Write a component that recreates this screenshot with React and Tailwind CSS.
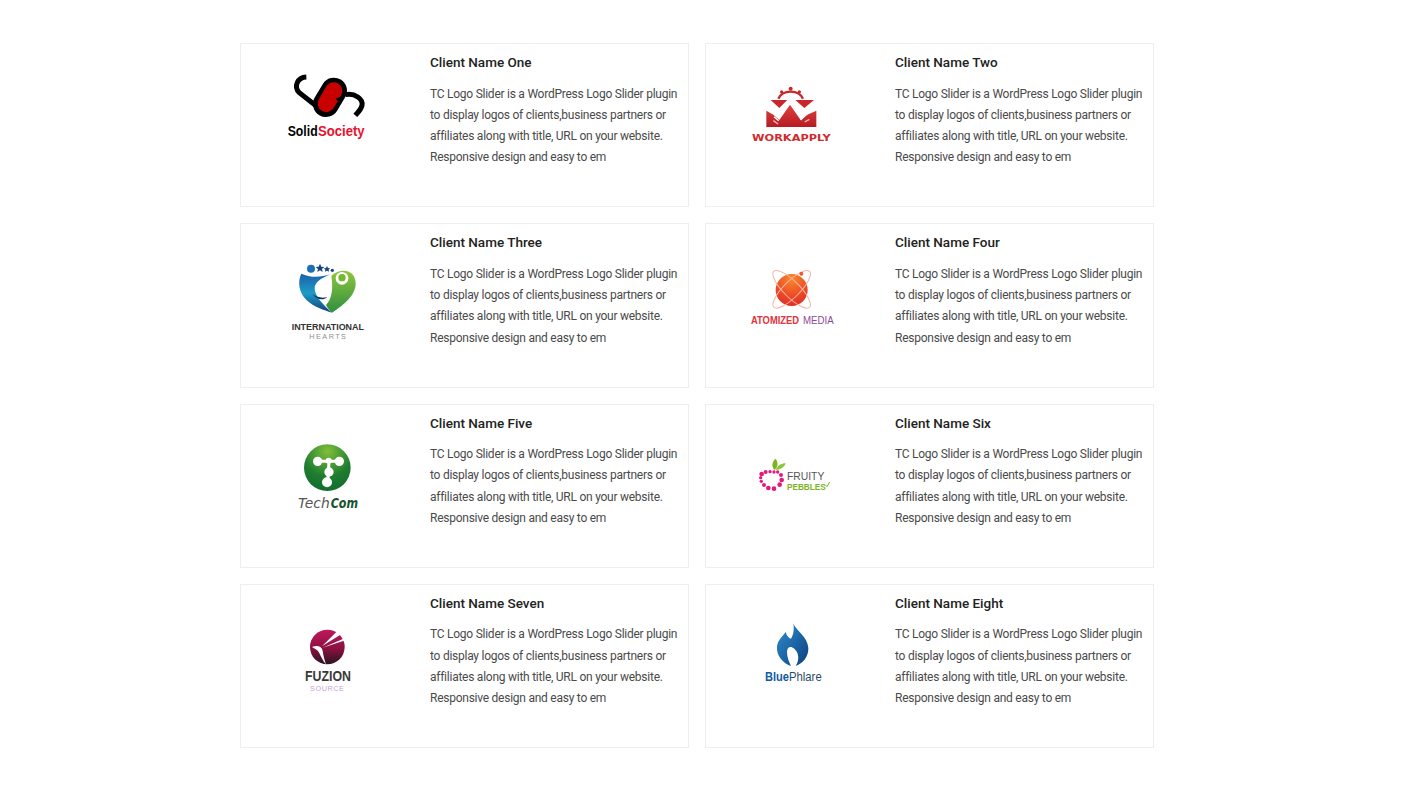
const blurb = [
  'TC Logo Slider is a WordPress Logo Slider plugin',
  'to display logos of clients,business partners or',
  'affiliates along with title, URL on your website.',
  'Responsive design and easy to em',
];

// viewBox is in 3x units, so logos are 160x140 on the page
function Logo({ box, children }) {
  return (
    <svg viewBox={`${box} 480 420`} className="w-[160px] h-[140px] block">
      {children}
    </svg>
  );
}

function SolidSociety() {
  return (
    <Logo box="21 30">
      <path d="M199 111C172 112 160 140 178 158L226 196" fill="none" stroke="#000" strokeWidth="15" />
      <line x1="282" y1="152" x2="258" y2="192" stroke="#000" strokeWidth="78" strokeLinecap="round" />
      <line x1="281" y1="153" x2="259" y2="190" stroke="#c90000" strokeWidth="52" strokeLinecap="round" />
      <path d="M305 168L287 176L298 188Z" fill="#000" />
      <path d="M316 164C345 158 370 178 366 196C363 209 354 217 346 226" fill="none" stroke="#000" strokeWidth="15" />
      <text x="143" y="288" textLength="90" lengthAdjust="spacingAndGlyphs" fill="#000" fontFamily="Liberation Sans, sans-serif" fontWeight="700" fontSize="42">Solid</text>
      <text x="234" y="288" textLength="140" lengthAdjust="spacingAndGlyphs" fill="#e8112d" fontFamily="Liberation Sans, sans-serif" fontWeight="700" fontSize="42">Society</text>
    </Logo>
  );
}

function WorkApply() {
  return (
    <Logo box="-54 -60">
      <defs>
        <linearGradient id="wa" x1="0" y1="0" x2="0" y2="1">
          <stop offset="0" stopColor="#e2403f" />
          <stop offset="1" stopColor="#b51c22" />
        </linearGradient>
      </defs>
      <path d="M145 86A40 34 0 0 1 219 86" fill="none" stroke="#c8282c" strokeWidth="7" />
      <circle cx="182" cy="56" r="6" fill="#c8282c" />
      <circle cx="155" cy="66" r="5" fill="#c8282c" />
      <circle cx="208" cy="66" r="5" fill="#c8282c" />
      <path d="M122 90H172L148 114Z" fill="#c8282c" />
      <path d="M196 90H252L223 114Z" fill="#c8282c" />
      <path d="M109 122L130 134L148 150L180 104L212 150L232 134L259 122V171H109Z" fill="url(#wa)" />
      <path d="M126 130L150 124M132 140L146 152M212 150L234 128" stroke="#fff" strokeWidth="4" fill="none" />
      <path d="M130 152L144 162M224 156L238 148" stroke="#f3b8b8" strokeWidth="4" fill="none" />
      <text x="66" y="212" textLength="236" lengthAdjust="spacingAndGlyphs" fill="#cf2a2e" fontFamily="DejaVu Sans, sans-serif" fontWeight="700" fontSize="27">WORKAPPLY</text>
    </Logo>
  );
}

function IntlHearts() {
  return (
    <Logo box="-69 -75">
      <defs>
        <linearGradient id="ihb" x1="0" y1="0" x2="0" y2="1">
          <stop offset="0" stopColor="#1a5fa8" />
          <stop offset="0.5" stopColor="#1e9cc8" />
          <stop offset="1" stopColor="#123f78" />
        </linearGradient>
        <linearGradient id="ihg" x1="0" y1="0" x2="0" y2="1">
          <stop offset="0" stopColor="#8fc640" />
          <stop offset="1" stopColor="#2f8f3f" />
        </linearGradient>
      </defs>
      <path d="M94 56C82 80 86 112 110 136C132 156 162 166 186 173C160 150 134 124 134 100C134 84 150 70 182 58C150 68 120 68 94 56Z" fill="url(#ihb)" />
      <path d="M128 118C142 128 158 130 172 126C160 138 140 134 128 118Z" fill="#12305f" />
      <circle cx="123" cy="41" r="12" fill="#1a6fb5" />
      <path d="M150 26L154 35L163 36L156 42L158 51L150 46L142 51L144 42L137 36L146 35Z" fill="#16467f" />
      <path d="M171 33L174 39L180 40L176 44L177 50L171 47L165 50L166 44L162 40L168 39Z" fill="#16467f" />
      <circle cx="187" cy="46" r="5" fill="#16467f" />
      <path d="M184 62C215 36 256 46 257 84C258 120 222 150 186 173C178 166 172 158 168 150C186 132 190 100 184 62Z" fill="url(#ihg)" />
      <circle cx="216" cy="70" r="19" fill="#fff" />
      <circle cx="216" cy="68" r="11" fill="#76b82a" />
      <text x="65" y="225" textLength="217" lengthAdjust="spacingAndGlyphs" fill="#333" fontFamily="Liberation Sans, sans-serif" fontWeight="700" fontSize="29">INTERNATIONAL</text>
      <text x="118" y="251" textLength="110" lengthAdjust="spacing" fill="#8f8f8f" fontFamily="Liberation Sans, sans-serif" fontSize="22">HEARTS</text>
    </Logo>
  );
}

function Atomized() {
  return (
    <Logo box="-69 -90">
      <defs>
        <radialGradient id="am" cx="0.5" cy="0.15" r="0.9">
          <stop offset="0" stopColor="#f78a2a" />
          <stop offset="0.6" stopColor="#ec4a27" />
          <stop offset="1" stopColor="#df2a25" />
        </radialGradient>
      </defs>
      <circle cx="170" cy="90" r="48" fill="url(#am)" />
      <ellipse cx="170" cy="88" rx="76" ry="24" transform="rotate(-45 170 88)" fill="none" stroke="#f6b5a6" strokeWidth="3" />
      <ellipse cx="170" cy="88" rx="76" ry="24" transform="rotate(45 170 88)" fill="none" stroke="#f6b5a6" strokeWidth="3" />
      <circle cx="199" cy="41" r="6" fill="#ee5a2d" />
      <text x="48" y="192" textLength="144" lengthAdjust="spacingAndGlyphs" fill="#e2323b" fontFamily="Liberation Sans, sans-serif" fontWeight="700" fontSize="33">ATOMIZED</text>
      <text x="204" y="192" textLength="92" lengthAdjust="spacingAndGlyphs" fill="#8c4a9e" fontFamily="Liberation Sans, sans-serif" fontSize="33">MEDIA</text>
    </Logo>
  );
}

function TechCom() {
  return (
    <Logo box="-99 -72">
      <defs>
        <radialGradient id="tc" cx="0.5" cy="0.15" r="0.9">
          <stop offset="0" stopColor="#7fbf3a" />
          <stop offset="0.6" stopColor="#1f7d30" />
          <stop offset="1" stopColor="#0f6b2c" />
        </radialGradient>
      </defs>
      <circle cx="142" cy="98" r="70" fill="url(#tc)" />
      <path d="M113 79H178M147 79L143 142" stroke="#fff" strokeWidth="9" fill="none" />
      <circle cx="113" cy="79" r="14" fill="#fff" />
      <circle cx="146" cy="77" r="9" fill="#fff" />
      <circle cx="178" cy="79" r="14" fill="#fff" />
      <circle cx="147" cy="111" r="14" fill="#fff" />
      <circle cx="141" cy="142" r="15" fill="#fff" />
      <text x="54" y="219" textLength="95" lengthAdjust="spacingAndGlyphs" fill="#555" fontFamily="DejaVu Sans, sans-serif" fontStyle="italic" fontSize="40">Tech</text>
      <text x="152" y="219" textLength="82" lengthAdjust="spacingAndGlyphs" fill="#14532d" fontFamily="DejaVu Sans, sans-serif" fontStyle="italic" fontWeight="700" fontSize="40">Com</text>
    </Logo>
  );
}

function FruityPebbles() {
  const dots = [
    [50, 72, 7], [62, 66, 6], [75, 65, 5], [87, 66, 5], [98, 66, 5], [108, 75, 6],
    [110, 90, 7], [104, 104, 7], [87, 116, 7], [70, 114, 7], [57, 105, 6], [49, 94, 5], [47, 83, 5],
  ];
  return (
    <Logo box="-99 -117">
      {dots.map(([cx, cy, r]) => (
        <circle key={`${cx}-${cy}`} cx={cx} cy={cy} r={r} fill="#e5197d" />
      ))}
      <path d="M88 60C78 48 82 34 92 26C100 38 100 50 88 60Z" fill="#7ab51d" />
      <path d="M92 60C98 46 108 40 122 40C118 52 106 60 92 60Z" fill="#8cc63f" />
      <text x="126" y="90" textLength="112" lengthAdjust="spacingAndGlyphs" fill="#555" fontFamily="Liberation Sans, sans-serif" fontSize="31">FRUITY</text>
      <text x="126" y="120" textLength="116" lengthAdjust="spacingAndGlyphs" fill="#7ab51d" fontFamily="Liberation Sans, sans-serif" fontWeight="700" fontSize="28">PEBBLES</text>
      <path d="M240 104L246 110L254 96" stroke="#7ab51d" strokeWidth="3" fill="none" />
    </Logo>
  );
}

function Fuzion() {
  return (
    <Logo box="-129 -84">
      <defs>
        <linearGradient id="fz" x1="0" y1="0" x2="0" y2="1">
          <stop offset="0" stopColor="#c2185b" />
          <stop offset="0.55" stopColor="#8a1040" />
          <stop offset="1" stopColor="#2a1420" />
        </linearGradient>
      </defs>
      <circle cx="112" cy="84" r="52" fill="url(#fz)" />
      <path d="M148 30L96 82L156 44Z" fill="#fff" />
      <path d="M172 54L98 86L166 64Z" fill="#fff" />
      <path d="M66 84C82 78 96 82 98 96C100 110 104 124 108 136C96 122 90 104 84 96C78 90 72 88 66 84Z" fill="#fff" />
      <text x="45" y="187" textLength="138" lengthAdjust="spacingAndGlyphs" fill="#3a3a3a" fontFamily="Liberation Sans, sans-serif" fontWeight="700" fontSize="42">FUZION</text>
      <text x="60" y="215" textLength="102" lengthAdjust="spacing" fill="#c9a6d6" fontFamily="Liberation Sans, sans-serif" fontSize="22">SOURCE</text>
    </Logo>
  );
}

function BluePhlare() {
  return (
    <Logo box="-129 -69">
      <defs>
        <linearGradient id="bp" x1="0" y1="0" x2="1" y2="1">
          <stop offset="0" stopColor="#2f8fd0" />
          <stop offset="1" stopColor="#0b3f7d" />
        </linearGradient>
      </defs>
      <path d="M115 28C122 50 158 68 160 102C161 128 144 148 122 156C134 138 132 116 118 104C106 94 96 100 96 114C96 130 102 144 108 156C82 146 64 124 66 98C68 78 84 66 92 54C96 66 100 72 108 74C116 62 118 44 115 28Z" fill="url(#bp)" />
      <text x="30" y="202" textLength="72" lengthAdjust="spacingAndGlyphs" fill="#0f5c9e" fontFamily="Liberation Sans, sans-serif" fontWeight="700" fontSize="37">Blue</text>
      <text x="102" y="202" textLength="98" lengthAdjust="spacingAndGlyphs" fill="#2b4a68" fontFamily="Liberation Sans, sans-serif" fontSize="37">Phlare</text>
    </Logo>
  );
}

const clients = [
  { name: 'Client Name One', logo: <SolidSociety /> },
  { name: 'Client Name Two', logo: <WorkApply /> },
  { name: 'Client Name Three', logo: <IntlHearts /> },
  { name: 'Client Name Four', logo: <Atomized /> },
  { name: 'Client Name Five', logo: <TechCom /> },
  { name: 'Client Name Six', logo: <FruityPebbles /> },
  { name: 'Client Name Seven', logo: <Fuzion /> },
  { name: 'Client Name Eight', logo: <BluePhlare /> },
];

function ClientCard({ name, logo }) {
  return (
    <div className="h-[164.33px] border border-[#eeeeee] bg-white flex">
      <div className="w-[189px] shrink-0 pl-[6px] pt-[6px]">{logo}</div>
      <div className="flex-1 pt-[9px]">
        <h3 className="text-[13.5px] leading-[18px] font-medium text-[#222222]">{name}</h3>
        <p className="mt-[12.5px] text-[12px] leading-[21.33px] tracking-[-0.25px] text-[#4a4a4a]">
          {blurb.map((line) => (
            <span key={line} className="block whitespace-nowrap">{line}</span>
          ))}
        </p>
      </div>
    </div>
  );
}

export default function App() {
  return (
    <div className="min-h-[795px] bg-white pt-[43px] pl-[240px] font-['Roboto',sans-serif]">
      <div className="w-[914px] grid grid-cols-2 gap-x-[16px] gap-y-[16px]">
        {clients.map((c) => (
          <ClientCard key={c.name} name={c.name} logo={c.logo} />
        ))}
      </div>
    </div>
  );
}
